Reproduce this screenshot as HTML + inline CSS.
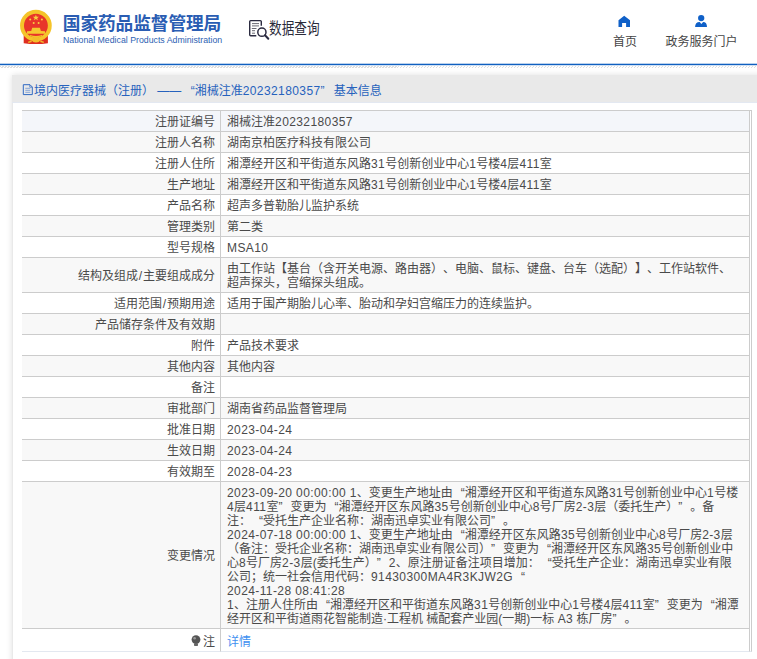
<!DOCTYPE html>
<html lang="zh-CN">
<head>
<meta charset="utf-8">
<title>国家药品监督管理局 数据查询</title>
<style>
html,body{margin:0;padding:0;}
body{width:757px;height:659px;overflow:hidden;background:#fff;position:relative;font-family:"Liberation Sans","Noto Sans CJK SC",sans-serif;font-size:12px;color:#333;text-spacing-trim:space-all;}
.abs{position:absolute;}
.j{display:block;white-space:nowrap;text-align:justify;text-align-last:justify;}
.n{letter-spacing:0.4px;}
.s{padding:0 0.8px;}
.lq{display:inline-block;width:1em;text-align:right;text-align-last:right;}
.rq{display:inline-block;width:1em;text-align:left;text-align-last:left;}
#hdr{left:0;top:0;width:757px;height:63px;background:#fff;}
#blue{left:0;top:63px;width:757px;height:3px;background:linear-gradient(#b9d0ec 0,#b9d0ec 1px,#1060c0 1px,#1060c0 2px,#cfdff2 2px,#cfdff2 3px);}
#hatch{left:0;top:66px;width:757px;height:2px;background:repeating-linear-gradient(135deg,#dedede 0,#dedede 0.75px,#fff 0.75px,#fff 2.121px);}
#sub{left:63px;top:34px;font-size:9.3px;line-height:13px;color:#2d5fb3;white-space:nowrap;transform:scaleX(0.942);transform-origin:0 0;}
#dq{left:269px;top:18px;font-size:16px;line-height:22px;color:#2b2b3a;white-space:nowrap;transform:scaleX(0.79);transform-origin:0 0;}
.nav{top:32px;width:100px;text-align:center;font-size:12px;line-height:20px;color:#454545;white-space:nowrap;}
#panel{left:12px;top:75px;width:760px;height:600px;background:#fff;box-shadow:0 0 6px rgba(0,0,0,0.13);border-left:1px solid #e9e9e9;box-sizing:border-box;}
#ttl{left:12px;top:75px;width:745px;height:27px;background:#e9e9e9;border-bottom:1px solid #e3e8f1;}
#ttxt{left:34px;top:77px;font-size:12px;line-height:28px;color:#2662bd;white-space:nowrap;}
table{position:absolute;left:22px;top:110px;width:730px;border-collapse:separate;border-spacing:0;table-layout:fixed;font-size:12px;line-height:14px;color:#4a4a4a;}
th,td{box-sizing:border-box;border-top:1px solid #ccc;border-right:1px solid #ccc;padding:4px 6px 2px 6px;vertical-align:middle;font-weight:normal;white-space:nowrap;overflow:hidden;}
th{width:199px;text-align:right;padding-right:5px;}
td{width:529px;text-align:left;}
td.x{width:2px;padding:0;border-top:none;background:#fff !important;}
tr:first-child td.x{border-top:1px solid #ccc;}
tr.b th,tr.b td{background:#f4f6fa;}
tr.g th,tr.g td{background:#f8f8f8;}
tr.w th,tr.w td{background:#fff;}
tr:last-child th,tr:last-child td{border-bottom:1px solid #e3e8f0;padding-top:5px;}
a{color:#3f90f0;text-decoration:none;}
.bulb{vertical-align:-1.5px;margin-right:2px;}
</style>
</head>
<body>
<div id="hdr" class="abs"></div>

<svg class="abs" style="left:18px;top:8px" width="36" height="38" viewBox="18 8 36 38">
 <path d="M23.7 34 V43.2 Q36 45 47.9 43.2 V34 Z" fill="#df2e20"/>
 <circle cx="35.9" cy="25.6" r="13.9" fill="#e8352a" stroke="#f5c42a" stroke-width="3.9"/>
 <path d="M35.9 14.7l.8 2 2.2.1-1.7 1.4.6 2.1-1.9-1.2-1.9 1.2.6-2.1-1.7-1.4 2.2-.1z" fill="#f8d040"/>
 <circle cx="30.2" cy="19.5" r="1" fill="#f8d040"/><circle cx="41.9" cy="19.5" r="1" fill="#f8d040"/>
 <circle cx="33.7" cy="23" r="1" fill="#f8d040"/><circle cx="38.6" cy="23" r="1" fill="#f8d040"/>
 <path d="M31.2 31 L32.2 27.8 L39.9 27.8 L40.9 31 L45 31.2 L45 33.7 L27 33.7 L27 31.2 Z" fill="#f6c830"/>
 <path d="M30 35.6 Q36 37.6 42 35.6" stroke="#f5c42a" stroke-width="1.2" fill="none"/>
 <path d="M32.2 38 Q36 35.4 39.8 38 L39.3 41.8 Q36 43 32.7 41.8 Z" fill="#f3bd2a"/>
 <path d="M28.2 42.4 L31.6 41.2 M43.8 42.4 L40.4 41.2" stroke="#f3bd2a" stroke-width="1.5"/>
</svg>

<svg class="abs" style="left:60px;top:10px" width="170" height="26" viewBox="0 0 170 26" role="img" aria-label="国家药品监督管理局"><text x="2.8" y="19.8" font-family="&quot;Liberation Sans&quot;,&quot;Noto Sans CJK SC&quot;,sans-serif" font-size="17.7" font-weight="bold" fill="#2a5db3" textLength="158.5" lengthAdjust="spacing">国家药品监督管理局</text></svg>
<div id="sub" class="abs">National Medical Products Administration</div>

<svg class="abs" style="left:247px;top:18px" width="24" height="24" viewBox="247 18 24 24" fill="none" stroke="#2b2b40" stroke-width="1.4">
 <path d="M261.3 25.8 V21.6 Q261.3 20.6 260.3 20.6 H250.7 Q249.7 20.6 249.7 21.6 V34.8 Q249.7 35.8 250.7 35.8 H256.3"/>
 <path d="M252 23.6 H259 M252 25.9 H259 M251.8 28.5 H256.5 M252 30.7 H255 M252 33.2 H255" stroke-width="1" stroke="#6a6a74"/>
 <circle cx="261.9" cy="32.2" r="4.1" stroke-width="1.5"/>
 <path d="M265 35.3 L268.3 38.7" stroke-width="2" stroke-linecap="round"/>
</svg>
<div id="dq" class="abs"><div class="j" style="width:64.0px">数据查询</div></div>

<svg class="abs" style="left:617px;top:14px" width="15" height="15" viewBox="617 14 15 15"><path d="M624.2 15.7 L630 20.2 V26.9 H626.1 V22.9 H622.1 V26.9 H618.5 V20.2 Z" fill="#0f60c8"/></svg>
<div class="nav abs" style="left:575px"><div class="j" style="width:24.0px;margin:0 auto">首页</div></div>
<svg class="abs" style="left:693px;top:13px" width="17" height="16" viewBox="693 13 17 16"><circle cx="701.2" cy="18.1" r="3.15" fill="#0f60c8"/><path d="M695.1 27.1 Q695.1 22 699.7 21.9 L701.4 24 L703.1 21.9 Q707 22 707 27.1 Z" fill="#0f60c8"/></svg>
<div class="nav abs" style="left:651.5px"><div class="j" style="width:72.0px;margin:0 auto">政务服务门户</div></div>

<div id="blue" class="abs"></div>
<div id="hatch" class="abs"></div>

<div id="panel" class="abs"></div>
<div id="ttl" class="abs"></div>
<svg class="abs" style="left:22px;top:83px" width="12" height="13" viewBox="22 83 12 13" fill="none" stroke="#2f68c2" stroke-width="1"><path d="M23.3 84.7 H30 L32.3 87 V94.6 H23.3 Z"/><path d="M29.8 84.9 V87.2 H32.1" stroke-width="0.7"/><path d="M25.3 88.3 H30.3 M25.3 90.3 H30.3 M25.3 92.3 H30.3" stroke-width="0.7" stroke="#5a86cf"/></svg>
<div id="ttxt" class="abs"><div class="j" style="width:347.9px">境内医疗器械（注册） —— <span class="lq" style="width:10px">“</span>湘械注准<span class="n">20232180357</span><span class="rq" style="width:10px">”</span> 基本信息</div></div>

<table>
<tr class="b" style="height:21px"><th><div class="j" style="width:60.0px;margin-left:auto">注册证编号</div></th><td><div class="j" style="width:125.9px">湘械注准<span class="n">20232180357</span></div></td><td class="x"></td></tr>
<tr class="g" style="height:21px"><th><div class="j" style="width:60.0px;margin-left:auto">注册人名称</div></th><td><div class="j" style="width:144.0px">湖南京柏医疗科技有限公司</div></td><td class="x"></td></tr>
<tr class="w" style="height:21px"><th><div class="j" style="width:60.0px;margin-left:auto">注册人住所</div></th><td><div class="j" style="width:324.7px">湘潭经开区和平街道东风路<span class="n">31</span>号创新创业中心<span class="n">1</span>号楼<span class="n">4</span>层<span class="n">411</span>室</div></td><td class="x"></td></tr>
<tr class="g" style="height:21px"><th><div class="j" style="width:48.0px;margin-left:auto">生产地址</div></th><td><div class="j" style="width:324.7px">湘潭经开区和平街道东风路<span class="n">31</span>号创新创业中心<span class="n">1</span>号楼<span class="n">4</span>层<span class="n">411</span>室</div></td><td class="x"></td></tr>
<tr class="w" style="height:21px"><th><div class="j" style="width:48.0px;margin-left:auto">产品名称</div></th><td><div class="j" style="width:132.0px">超声多普勒胎儿监护系统</div></td><td class="x"></td></tr>
<tr class="g" style="height:21px"><th><div class="j" style="width:48.0px;margin-left:auto">管理类别</div></th><td><div class="j" style="width:36.0px">第二类</div></td><td class="x"></td></tr>
<tr class="w" style="height:21px"><th><div class="j" style="width:48.0px;margin-left:auto">型号规格</div></th><td><div class="j" style="width:41.4px"><span class="n">MSA10</span></div></td><td class="x"></td></tr>
<tr class="g" style="height:35px"><th><div class="j" style="width:137.0px;margin-left:auto">结构及组成<span class="s">/</span>主要组成成分</div></th><td><div class="j" style="width:504.0px">由工作站【基台（含开关电源、路由器）、电脑、鼠标、键盘、台车（选配）】、工作站软件、</div><div class="j" style="width:144.0px">超声探头，宫缩探头组成。</div></td><td class="x"></td></tr>
<tr class="w" style="height:21px"><th><div class="j" style="width:101.0px;margin-left:auto">适用范围<span class="s">/</span>预期用途</div></th><td><div class="j" style="width:312.0px">适用于围产期胎儿心率、胎动和孕妇宫缩压力的连续监护。</div></td><td class="x"></td></tr>
<tr class="g" style="height:21px"><th><div class="j" style="width:120.0px;margin-left:auto">产品储存条件及有效期</div></th><td></td><td class="x"></td></tr>
<tr class="w" style="height:21px"><th><div class="j" style="width:24.0px;margin-left:auto">附件</div></th><td><div class="j" style="width:72.0px">产品技术要求</div></td><td class="x"></td></tr>
<tr class="g" style="height:21px"><th><div class="j" style="width:48.0px;margin-left:auto">其他内容</div></th><td><div class="j" style="width:48.0px">其他内容</div></td><td class="x"></td></tr>
<tr class="w" style="height:21px"><th><div class="j" style="width:24.0px;margin-left:auto">备注</div></th><td></td><td class="x"></td></tr>
<tr class="g" style="height:21px"><th><div class="j" style="width:48.0px;margin-left:auto">审批部门</div></th><td><div class="j" style="width:120.0px">湖南省药品监督管理局</div></td><td class="x"></td></tr>
<tr class="w" style="height:21px"><th><div class="j" style="width:48.0px;margin-left:auto">批准日期</div></th><td><div class="j" style="width:65.4px"><span class="n">2023-04-24</span></div></td><td class="x"></td></tr>
<tr class="g" style="height:21px"><th><div class="j" style="width:48.0px;margin-left:auto">生效日期</div></th><td><div class="j" style="width:65.4px"><span class="n">2023-04-24</span></div></td><td class="x"></td></tr>
<tr class="w" style="height:21px"><th><div class="j" style="width:48.0px;margin-left:auto">有效期至</div></th><td><div class="j" style="width:65.4px"><span class="n">2028-04-23</span></div></td><td class="x"></td></tr>
<tr class="g" style="height:147px"><th><div class="j" style="width:48.0px;margin-left:auto">变更情况</div></th><td><div class="j" style="width:511.1px"><span class="n">2023-09-20 00:00:00 1</span>、变更生产地址由<span class="lq">“</span>湘潭经开区和平街道东风路<span class="n">31</span>号创新创业中心<span class="n">1</span>号楼</div><div class="j" style="width:487.3px"><span class="n">4</span>层<span class="n">411</span>室<span class="rq">”</span>变更为<span class="lq">“</span>湘潭经开区东风路<span class="n">35</span>号创新创业中心<span class="n">8</span>号厂房<span class="n">2-3</span>层（委托生产）<span class="rq">”</span>。备</div><div class="j" style="width:288.0px">注：<span class="lq">“</span>受托生产企业名称：湖南迅卓实业有限公司<span class="rq">”</span>。</div><div class="j" style="width:505.7px"><span class="n">2024-07-18 00:00:00 1</span>、变更生产地址由<span class="lq">“</span>湘潭经开区东风路<span class="n">35</span>号创新创业中心<span class="n">8</span>号厂房<span class="n">2-3</span>层</div><div class="j" style="width:506.2px">（备注：受托企业名称：湖南迅卓实业有限公司）<span class="rq">”</span>变更为<span class="lq">“</span>湘潭经开区东风路<span class="n">35</span>号创新创业中</div><div class="j" style="width:504.8px">心<span class="n">8</span>号厂房<span class="n">2-3</span>层(委托生产）<span class="rq">”</span><span class="n">2</span>、原注册证备注项目增加：<span class="lq">“</span>受托生产企业：湖南迅卓实业有限</div><div class="j" style="width:298.0px">公司；统一社会信用代码：<span class="n">91430300MA4R3KJW2G</span><span class="lq">“</span></div><div class="j" style="width:118.2px"><span class="n">2024-11-28 08:41:28</span></div><div class="j" style="width:511.8px"><span class="n">1</span>、注册人住所由<span class="lq">“</span>湘潭经开区和平街道东风路<span class="n">31</span>号创新创业中心<span class="n">1</span>号楼<span class="n">4</span>层<span class="n">411</span>室<span class="rq">”</span>变更为<span class="lq">“</span>湘潭</div><div class="j" style="width:409.5px">经开区和平街道雨花智能制造·工程机 械配套产业园(一期)一标 <span class="n">A3</span> 栋厂房<span class="rq">”</span>。</div></td><td class="x"></td></tr>
<tr class="w" style="height:24px"><th><div class="j" style="width:24.0px;margin-left:auto"><svg class="bulb" width="10" height="12" viewBox="0 0 10 12"><circle cx="5" cy="4.6" r="4.4" fill="#555"/><rect x="3" y="8.6" width="4" height="2.4" rx="0.8" fill="#666"/><circle cx="3.6" cy="3.2" r="1.3" fill="#9a9a9a"/></svg>注</div></th><td><div class="j" style="width:24.0px"><a>详情</a></div></td><td class="x"></td></tr>
</table>
</body>
</html>
